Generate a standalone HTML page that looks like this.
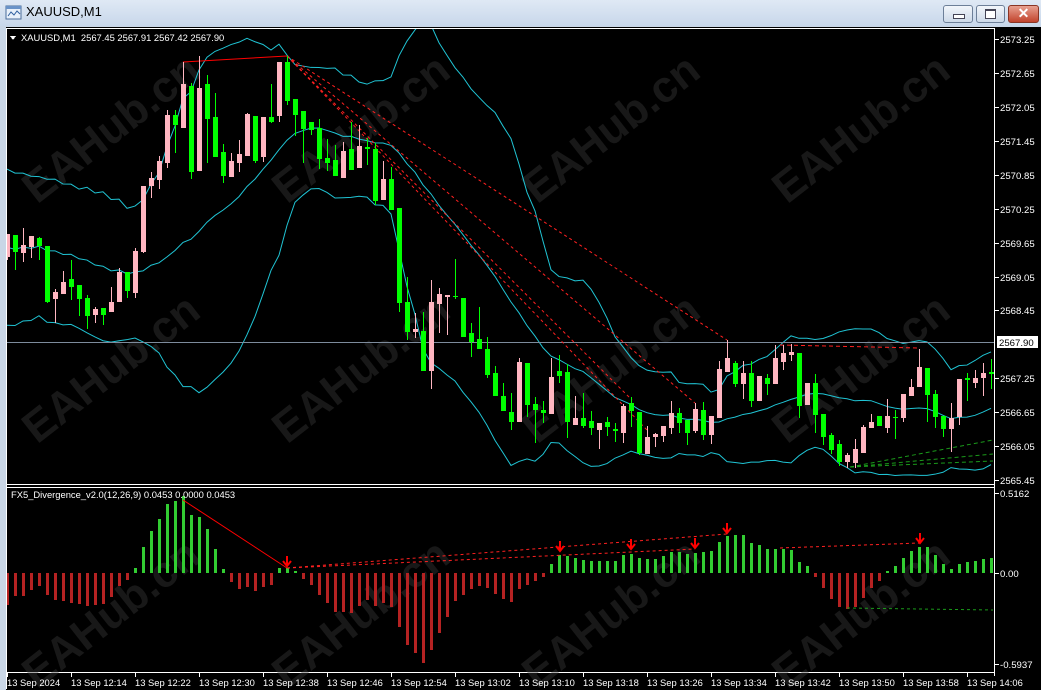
<!DOCTYPE html>
<html><head><meta charset="utf-8"><style>
html,body{margin:0;padding:0;width:1041px;height:690px;overflow:hidden;background:#c9d6e6;font-family:"Liberation Sans",sans-serif}
#title{position:absolute;left:0;top:0;width:1041px;height:26px;background:linear-gradient(#dfe9f5,#c8d7ea)}
#title .t{position:absolute;left:26px;top:4px;font-size:13px;color:#000}
.btn{position:absolute;top:5px;height:16px;border:1px solid #6d7f98;border-radius:3px;background:linear-gradient(#f2f6fb,#cdd9e8)}
svg{position:absolute;left:0;top:0}
</style></head><body>
<div id="title">
<svg width="20" height="20" style="left:4px;top:3px" viewBox="0 0 20 20"><rect x="2" y="3" width="15" height="13" fill="#e8f0fa" stroke="#4a6d9a"/><rect x="2" y="3" width="15" height="3" fill="#6a93c8"/><path d="M4 13 L7 9 L10 12 L13 8 L16 11" stroke="#2f5f9f" fill="none"/></svg>
<div class="t">XAUUSD,M1</div>
<div class="btn" style="left:943px;width:28px"><div style="position:absolute;left:9px;top:8px;width:10px;height:3px;background:#fff;border:1px solid #445"></div></div>
<div class="btn" style="left:976px;width:27px"><div style="position:absolute;left:8px;top:3px;width:9px;height:7px;border:1px solid #445;border-top-width:2px;background:#fff"></div></div>
<div class="btn" style="left:1008px;width:29px;background:linear-gradient(#e8a191,#c2432c);border-color:#8a3525"><div style="position:absolute;left:0;width:29px;top:-1px;text-align:center;color:#fff;font-weight:bold;font-size:14px">✕</div></div>
</div>
<svg id="s" width="1041" height="690" style="top:0" shape-rendering="crispEdges"></svg>
<script>
var D="p,234,257,234,260;g,235,252,235,270;p,245,253,228,262;p,236,247,236,258;g,238,246,237,260;g,246,302,246,303;p,292,299,289,323;p,282,294,271,294;g,279,287,260,300;g,285,299,285,316;g,298,316,295,329;p,309,315,307,323;g,308,315,308,325;p,302,312,287,312;p,272,302,268,302;g,272,291,272,298;p,251,293,248,298;p,186,252,186,253;p,178,186,172,198;p,161,180,156,189;p,115,163,110,168;g,115,125,110,153;p,84,128,62,128;g,86,172,83,179;p,88,171,56,171;g,84,119,75,163;g,117,157,93,157;g,152,176,144,183;p,161,177,153,177;p,154,163,140,172;p,114,156,113,156;g,116,161,116,163;p,117,157,117,162;g,117,122,84,123;p,62,116,62,122;g,62,101,56,105;g,99,115,99,136;g,111,129,111,163;g,122,130,122,135;g,128,159,119,169;g,158,163,139,171;g,160,176,145,176;p,151,178,142,178;g,149,170,122,170;p,146,168,125,168;g,147,149,138,165;g,149,201,143,205;p,179,200,161,200;g,179,210,167,210;g,208,303,208,312;g,302,332,277,340;p,329,332,313,338;g,331,371,312,371;p,302,371,280,389;p,294,304,288,333;p,295,297,295,335;g,296,297,259,299;g,298,337,298,337;g,333,342,323,357;g,339,349,307,349;g,349,375,337,378;g,373,396,366,396;g,396,411,383,411;g,412,422,393,430;p,362,422,358,422;g,363,405,363,417;g,404,410,397,443;g,410,413,401,423;p,377,414,358,414;g,371,376,355,383;g,372,422,364,438;p,418,425,396,425;g,418,426,393,428;g,421,428,411,435;p,423,430,423,449;g,422,427,417,436;g,429,431,423,442;p,406,433,404,443;g,403,411,397,427;g,412,453,412,455;p,437,454,426,454;p,434,437,433,447;p,426,436,426,442;p,413,428,401,434;g,413,423,408,433;g,420,433,420,445;p,409,431,403,433;g,410,435,402,440;p,416,435,416,444;p,369,418,361,418;p,358,372,340,372;g,363,384,361,387;p,373,384,361,399;g,373,401,361,407;p,376,401,376,401;g,378,384,374,395;p,358,384,345,384;p,353,362,345,370;p,352,355,344,361;g,353,406,353,418;p,383,405,383,405;g,383,415,374,433;g,414,437,414,445;g,435,450,433,454;g,444,462,440,466;p,455,462,453,468;p,449,463,439,468;p,427,453,425,453;p,422,428,414,428;g,416,426,416,426;p,416,428,399,433;g,417,418,410,439;p,394,418,394,422;p,387,396,379,396;p,367,387,349,387;g,368,395,368,422;g,394,417,390,428;g,416,429,416,437;p,418,429,403,452;p,379,417,379,425;g,378,380,373,401;p,378,383,370,388;p,373,378,363,396;g,372,374,359,389";
var H=[-32,-23,-23,-17,-13,-22,-27,-28,-30,-31,-33,-32,-31,-24,-13,-7,5,26,42,54,69,72,77,58,56,44,24,4,-9,-16,-14,-18,-14,-12,5,5,2,-6,-12,-22,-30,-39,-39,-40,-33,-27,-33,-30,-34,-54,-72,-80,-90,-77,-60,-44,-28,-22,-16,-13,-15,-21,-26,-29,-16,-12,-8,-4,9,18,17,15,13,12,12,12,12,18,19,15,14,14,17,21,21,19,20,21,22,31,37,38,38,30,28,24,24,24,23,11,7,-4,-15,-26,-34,-36,-34,-25,-15,-8,2,7,15,22,26,26,18,9,4,9,11,12,14,15];
var o=[];
function R(x,y,w,h,c){o.push('<rect x="'+x+'" y="'+y+'" width="'+w+'" height="'+h+'" fill="'+c+'"/>');}
function L(p,c,dash,w){o.push('<polyline points="'+p+'" fill="none" stroke="'+c+'" stroke-width="'+(w||1)+'"'+(dash?' stroke-dasharray="'+dash+'"':'')+' shape-rendering="auto"/>');}
function T(x,y,t,s,a){o.push('<text x="'+x+'" y="'+y+'" fill="#fff" font-size="'+(s||11)+'"'+(a?' text-anchor="'+a+'"':'')+'>'+t+'</text>');}
R(6,27,1035,663,'#000');
R(6,28,1,661,'#fff');R(6,28,989,1,'#fff');R(994,28,1,648,'#fff');
R(6,484,989,1,'#fff');R(6,487,989,1,'#fff');R(6,672,989,1,'#fff');
var wm=[[120,140],[370,140],[620,140],[870,140],[120,380],[370,380],[620,380],[870,380],[120,625],[370,625],[620,625],[870,625]];
wm.forEach(function(p){o.push('<text x="'+p[0]+'" y="'+p[1]+'" fill="#3a3a3a" fill-opacity="0.42" font-size="44" font-weight="bold" text-anchor="middle" transform="rotate(-38 '+p[0]+' '+p[1]+')">EAHub.cn</text>');});
o.push('<svg x="7" y="29" width="987" height="455" overflow="hidden">');
var bars=D.split(';').map(function(s){var a=s.split(',');return {c:a[0],t:+a[1],b:+a[2],wt:+a[3],wb:+a[4]};});
var cl=[];for(var k=0;k<19;k++)cl.push(k%2?290:210);
bars.forEach(function(b){cl.push(b.c=='p'?b.t:b.b);});
var up=[],md=[],lo=[];
bars.forEach(function(b,i){var w=cl.slice(i,i+20),m=w.reduce(function(a,c){return a+c},0)/20,v=0;w.forEach(function(c){v+=(c-m)*(c-m)});var sd=Math.sqrt(v/20);var x=8*i;up.push(x+','+(m-2*sd-29));md.push(x+','+(m-29));lo.push(x+','+(m+2*sd-29));});
L(up.join(' '),'#20c4d4');L(md.join(' '),'#20c4d4');L(lo.join(' '),'#20c4d4');
R(0,313,987,1,'#7d8b9c');
L('176,33 280,27','#ff0000');
[[720,311],[688,374],[640,401],[625,371]].forEach(function(p){L('280,27 '+p[0]+','+p[1],'#ff2020','3,3');});
L('773,316 912,319','#ff2020','4,3');
[[986,411],[986,425],[986,432]].forEach(function(p){L('843,438 '+p[0]+','+p[1],'#1a9a1a','4,3');});
bars.forEach(function(b,i){var x=8*i;var c=b.c=='p'?'#ffb6c1':'#00ff00';R(x,b.wt-29,1,Math.max(1,b.wb-b.wt),c);R(x-2,b.t-29,5,Math.max(1,b.b-b.t),c);});
o.push('</svg>');
o.push('<svg x="7" y="488" width="987" height="184" overflow="hidden">');
H.forEach(function(h,i){var x=8*i-1;if(h>0)R(x,85-h,3,h,'#32cd32');else R(x,85,3,-h,'#b52222');});
L('176,12 280,80','#ff0000');
L('280,80 720,46','#ff2020','3,3');L('280,80 688,61','#ff2020','3,3');
L('773,60 913,55','#ff2020','3,3');
L('840,120 986,122','#1a9a1a','3,3');
[[280,78],[553,63],[624,61],[688,60],[720,45],[913,55]].forEach(function(p){L(p[0]+','+(p[1]-10)+' '+p[0]+','+p[1],'#ff0000',null,2);L((p[0]-4)+','+(p[1]-5)+' '+p[0]+','+p[1]+' '+(p[0]+4)+','+(p[1]-5),'#ff0000',null,2);});
o.push('</svg>');
o.push('<path d="M10 36 L16 36 L13 40 Z" fill="#fff"/>');
T(21,41,'XAUUSD,M1&#160; 2567.45 2567.91 2567.42 2567.90',9.4);
T(11,498,'FX5_Divergence_v2.0(12,26,9) 0.0453 0.0000 0.0453',9.4);
var pl=['2573.25','2572.65','2572.05','2571.45','2570.85','2570.25','2569.65','2569.05','2568.45','','2567.25','2566.65','2566.05','2565.45'];
pl.forEach(function(t,i){var y=39+i*33.93;if(i==9)return;R(995,Math.round(y),4,1,'#fff');T(1000,Math.round(y)+4,t,9.6);});
R(997,336,41,12,'#fff');o.push('<text x="999" y="346" font-size="9.6" fill="#000">2567.90</text>');
R(995,493,4,1,'#fff');T(1000,497,'0.5162',9.6);R(995,573,4,1,'#fff');T(1000,577,'0.00',9.6);R(995,664,4,1,'#fff');T(1000,668,'-0.5937',9.6);
var tl=['13 Sep 2024','13 Sep 12:14','13 Sep 12:22','13 Sep 12:30','13 Sep 12:38','13 Sep 12:46','13 Sep 12:54','13 Sep 13:02','13 Sep 13:10','13 Sep 13:18','13 Sep 13:26','13 Sep 13:34','13 Sep 13:42','13 Sep 13:50','13 Sep 13:58','13 Sep 14:06'];
tl.forEach(function(t,i){var x=7+64*i;R(x,673,1,4,'#fff');T(x,686,t,9.4);});
document.getElementById('s').innerHTML=o.join('');
</script>
</body></html>
